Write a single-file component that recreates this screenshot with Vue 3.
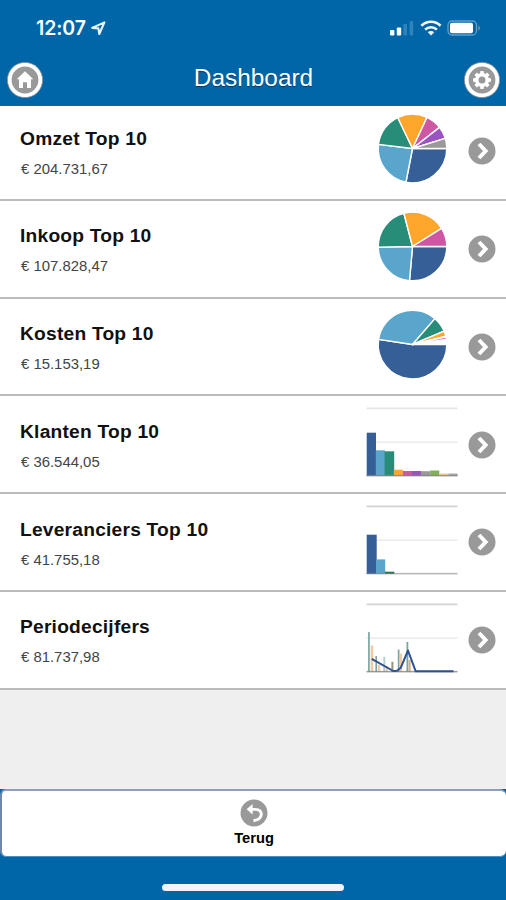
<template>
  <div class="app">
    <header class="header">
      <div class="status">
        <div class="status__time">
          <span>12:07</span>
          <svg width="15" height="15" viewBox="0 0 15 15">
            <path d="M1.2 6.9 13.4 1.400 8.3 13 7.400 7.400Z" fill="none" stroke="#e9f3fb" stroke-width="2.100" stroke-linejoin="round" />
          </svg>
        </div>
        <div class="status__icons">
          <svg width="25" height="16" viewBox="0 0 25 16">
            <rect x="0" y="10" width="4.400" height="5.500" rx="1" fill="#fff" />
            <rect x="6.800" y="7.500" width="4.400" height="8" rx="1" fill="#fff" />
            <rect x="13.400" y="4" width="3.600" height="11.500" rx="1" fill="#2f83bb" />
            <rect x="19.600" y="1" width="3.600" height="14.500" rx="1" fill="#2f83bb" />
          </svg>
          <svg width="22" height="16" viewBox="0 0 22 16">
            <g fill="none" stroke="#f4f9fd" stroke-width="2.600">
              <path d="M1.400 5.700a13.800 13.800 0 0 1 19.200 0" />
              <path d="M5.100 9.600a8.500 8.500 0 0 1 11.800 0" />
            </g>
            <path d="M7.800 12.200a4.600 4.600 0 0 1 6.400 0L11 15.600Z" fill="#f4f9fd" />
          </svg>
          <svg width="34" height="16" viewBox="0 0 34 16">
            <rect x="1" y="1" width="28.500" height="14" rx="4" fill="none" stroke="#5f9fcc" stroke-width="1.300" />
            <rect x="3" y="2.700" width="23" height="10.600" rx="2" fill="#fff" />
            <path d="M31.300 5.500c2 .8 2 4.200 0 5Z" fill="#5f9fcc" />
          </svg>
        </div>
      </div>
      <div class="navbar">
        <button class="navbar__button" type="button" aria-label="Home">
          <svg width="36" height="36" viewBox="0 0 36 36">
            <circle cx="18" cy="18" r="17.600" fill="#fff" stroke="#858f97" stroke-width=".8" />
            <circle cx="18" cy="18" r="13.400" fill="#999" />
            <path d="M18 9.200 26.300 17.300H24V26H20V20.300H16V26H12V17.300H9.700Z" fill="#fff" />
          </svg>
        </button>
        <h1 class="navbar__title">Dashboard</h1>
        <button class="navbar__button" type="button" aria-label="Instellingen">
          <svg width="36" height="36" viewBox="0 0 36 36">
            <circle cx="18" cy="18" r="17.600" fill="#fff" stroke="#858f97" stroke-width=".8" />
            <circle cx="18" cy="18" r="13.400" fill="#999" />
            <circle cx="18" cy="18" r="5.300" fill="none" stroke="#fff" stroke-width="3.600" />
            <rect
              v-for="n in 8"
              :key="n"
              x="16.200"
              y="9.100"
              width="3.600"
              height="3.400"
              fill="#fff"
              :transform="`rotate(${n * 45} 18 18)`"
            />
          </svg>
        </button>
      </div>
    </header>

    <main class="list">
      <div v-for="item in items" :key="item.title" class="row">
        <div class="row__text">
          <div class="row__title">{{ item.title }}</div>
          <div class="row__amount">{{ item.amount }}</div>
        </div>
        <svg class="row__chart" width="92" height="72" viewBox="0 0 92 72">
          <g v-if="item.slices" stroke="#fff" stroke-width="1.400" stroke-linejoin="round">
            <path v-for="slice in item.slices" :key="slice[0]" :d="slicePath(slice)" :fill="slice[2]" />
          </g>
          <template v-else>
            <rect x=".5" y=".5" width="91" height="1.800" :fill="item.grid" />
            <rect x=".5" y="34.500" width="91" height="1.300" fill="#e8e8e8" />
            <rect
              v-for="bar in item.bars"
              :key="bar[0]"
              :x="bar[0]"
              :y="bar[1]"
              :width="bar[2]"
              :height="69 - bar[1]"
              :fill="bar[3]"
            />
            <rect x=".5" y="67.900" width="91" height="1.500" fill="#858585" :opacity="item.base" />
            <polyline
              v-if="item.line"
              :points="item.line"
              fill="none"
              stroke="#2c5291"
              stroke-width="2"
              stroke-linejoin="round"
            />
          </template>
        </svg>
        <svg class="row__arrow" width="28" height="28" viewBox="0 0 28 28">
          <circle cx="14" cy="14" r="13.500" fill="#999" />
          <path d="M11 7 17.600 14 11 21" fill="none" stroke="#fff" stroke-width="4" />
        </svg>
      </div>
    </main>

    <footer class="footer">
      <button class="footer__back" type="button">
        <svg width="28" height="28" viewBox="0 0 28 28">
          <circle cx="14" cy="14" r="13.500" fill="#999" />
          <path
            d="M11 10.400H15C19.500 10.400 21.600 12.600 21.300 15.700C21 19 18 21 13.500 21.700"
            fill="none"
            stroke="#fff"
            stroke-width="2.900"
          />
          <path d="M6.600 10.300 12.600 5V15.500Z" fill="#fff" />
        </svg>
        <span>Terug</span>
      </button>
      <div class="footer__indicator"></div>
    </footer>
  </div>
</template>

<script setup>
const blue = "#375f97";
const sky = "#5aa5cb";
const green = "#278d78";
const orange = "#ffa62b";
const pink = "#cf56a3";
const purple = "#9a53c0";
const gray = "#999999";
const teal = "#79a69f";
const peach = "#f5c8a5";

// slices: start angle, end angle, colour
// bars: x, top, width, colour
const items = [
  {
    title: "Omzet Top 10",
    amount: "€ 204.731,67",
    slices: [
      [0, 101, blue],
      [101, 187, sky],
      [187, 244.5, green],
      [244.5, 295, orange],
      [295, 322, pink],
      [322, 342.7, purple],
      [342.7, 360, gray],
    ],
  },
  {
    title: "Inkoop Top 10",
    amount: "€ 107.828,47",
    slices: [
      [0, 95, blue],
      [95, 179, sky],
      [179, 255.5, green],
      [255.5, 328, orange],
      [328, 360, pink],
    ],
  },
  {
    title: "Kosten Top 10",
    amount: "€ 15.153,19",
    slices: [
      [0, 188.5, blue],
      [188.5, 311, sky],
      [311, 337, green],
      [337, 346, orange],
      [347, 351.5, "#dc7cb0"],
    ],
  },
  {
    title: "Klanten Top 10",
    amount: "€ 36.544,05",
    grid: "#e6e6e6",
    base: 0.8,
    bars: [
      [0.7, 25.7, 9.3, blue],
      [9.8, 43.3, 9.2, sky],
      [18.6, 44.3, 9.6, green],
      [27.8, 62.7, 9.1, orange],
      [36.9, 64, 9.1, pink],
      [46, 64, 9.1, purple],
      [55.1, 64.2, 9.1, gray],
      [64.2, 63.5, 9.1, "#80b254"],
      [73.3, 66.5, 9.1, "#f3cc80"],
      [82.4, 66.5, 9.1, "#aaaaaa"],
    ],
  },
  {
    title: "Leveranciers Top 10",
    amount: "€ 41.755,18",
    grid: "#d4d4d4",
    base: 0.6,
    bars: [
      [0.7, 29.7, 10, blue],
      [10, 54.4, 9.2, sky],
      [19, 66.7, 9.3, "#247453"],
    ],
  },
  {
    title: "Periodecijfers",
    amount: "€ 81.737,98",
    grid: "#d4d4d4",
    base: 0.8,
    bars: [
      [2.1, 29.1, 1.7, teal],
      [4.7, 42.5, 2.5, peach],
      [9.4, 53, 1.6, teal],
      [11.8, 62, 2.4, peach],
      [17.3, 53.8, 2, "#b5d0ca"],
      [19.8, 63, 2, peach],
      [25.4, 58.8, 2, "#96947a"],
      [31.8, 46.5, 1.7, teal],
      [34, 50.5, 2, peach],
      [40.5, 39, 1.8, teal],
      [42.6, 57, 2, "#d4ad80"],
    ],
    line: "5.7,55.8 27.3,68 31,67.7 34.7,64.8 42,47.5 49.7,68.3 87.5,68.3",
  },
];

function slicePath([start, end, color]) {
  const cx = 46.5;
  const cy = 34.5;
  const r = 34.3;
  const point = (angle) => {
    const rad = (angle * Math.PI) / 180;
    return `${(cx + r * Math.cos(rad)).toFixed(2)} ${(cy + r * Math.sin(rad)).toFixed(2)}`;
  };
  const large = end - start > 180 ? 1 : 0;
  return `M${cx} ${cy}L${point(start)}A${r} ${r} 0 ${large} 1 ${point(end)}Z`;
}
</script>

<style>
body {
  margin: 0;
}
</style>

<style scoped>
.app {
  height: 900px;
  display: flex;
  flex-direction: column;
  background: #efefef;
  font-family: "Liberation Sans", Arial, sans-serif;
  color: #111;
  overflow: hidden;
}

.header {
  position: relative;
  z-index: 1;
  box-sizing: border-box;
  height: 106px;
  flex: none;
  background: #0066a7;
  color: #fff;
}

.status {
  box-sizing: border-box;
  height: 56px;
  padding: 0 25px 0 36px;
  display: flex;
  align-items: center;
  justify-content: space-between;
}

.status__time {
  display: flex;
  align-items: center;
  gap: 5px;
  font-family: Inter, sans-serif;
  font-size: 19.5px;
  font-weight: 600;
  letter-spacing: -0.1px;
}

.status__icons {
  display: flex;
  align-items: center;
  gap: 5px;
}

.navbar {
  height: 48px;
  padding: 0 6px 0 7px;
  display: flex;
  align-items: center;
  justify-content: space-between;
}

.navbar__button {
  width: 36px;
  height: 36px;
  padding: 0;
  border: 0;
  background: none;
  color: inherit;
}

.navbar__button svg,
.footer__back svg {
  display: block;
}

.navbar__title {
  margin: -4px 0 0;
  font-size: 24.4px;
  font-weight: 400;
  text-shadow: 0 1px 1px rgba(0, 25, 60, 0.6);
}

.list {
  margin-top: -3px;
}

.row {
  box-sizing: border-box;
  height: 97.8px;
  padding: 0 10px 0 20px;
  display: flex;
  align-items: flex-start;
  background: #fff;
  border-bottom: 2px solid #bbb;
}

.row__text {
  flex: 1;
  padding-top: 24.5px;
}

.row__title {
  font-size: 19.2px;
  line-height: 22px;
  font-weight: 700;
  letter-spacing: 0.22px;
}

.row__amount {
  margin: 10px 0 0 1px;
  font-size: 14.9px;
  line-height: 18px;
  color: #444;
}

.row__chart {
  margin: 11px 10px 0 0;
}

.row__arrow {
  margin-top: 34.3px;
}

.footer {
  height: 111px;
  margin-top: auto;
  flex: none;
  display: flex;
  flex-direction: column;
  align-items: center;
  background: #0066a7;
}

.footer__back {
  box-sizing: border-box;
  width: 100%;
  height: 68px;
  padding: 8px 0 0;
  display: flex;
  flex-direction: column;
  align-items: center;
  gap: 1.5px;
  border: 1px solid #7087ab;
  border-top: 2px solid #8e9fbd;
  border-left-width: 2px;
  border-right-width: 0;
  border-bottom-color: #4d90bd;
  border-radius: 6px;
  background: #fff;
  color: #000;
  font: 700 14.7px/18px "Liberation Sans", Arial, sans-serif;
}

.footer__indicator {
  width: 182px;
  height: 7px;
  margin-top: 27px;
  border-radius: 4px;
  background: #f1f4fa;
}
</style>
